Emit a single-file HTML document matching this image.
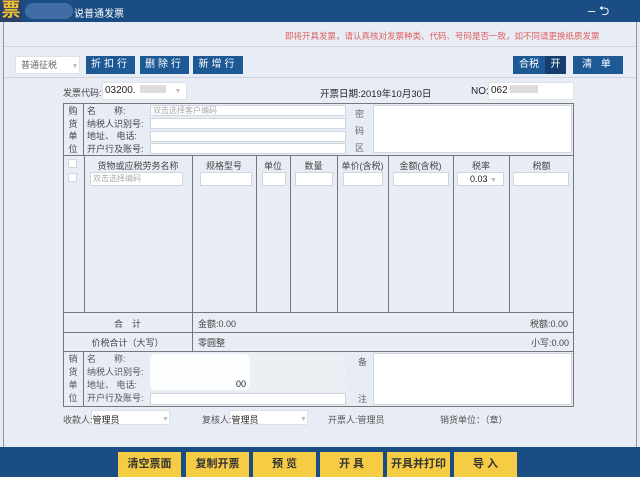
<!DOCTYPE html>
<html><head><meta charset="utf-8"><style>
*{margin:0;padding:0;box-sizing:border-box}
body{width:640px;height:477px;overflow:hidden;background:#e6ebf3;font-family:"Liberation Sans","Noto Sans CJK SC",sans-serif;font-size:9px;color:#333;position:relative}
.a{position:absolute}
.title{left:0;top:0;width:640px;height:22px;background:#1b4d85}
.panel{left:3px;top:22px;width:634px;height:425px;border-left:1px solid #8a97a8;border-right:1px solid #8a97a8;background:#e8edf5}
.btn{background:#1d5a95;color:#fff;text-align:center;line-height:18px;font-size:10px;letter-spacing:3px}
.inp{background:#fff;border:1px solid #d0d6de}
.sel{background:#fff;border:1px solid #dde2e8}
.vl{width:1px;background:#777}
.hl{height:1px;background:#777}
.lbl{color:#444}
.yb{background:#f6cc45;color:#333;text-align:center;line-height:25px;font-size:11px;font-weight:bold;top:452px;height:25px;width:63px}
.arrow{color:#bbb;font-size:7px}
</style></head><body>
<div class="a title"></div>
<div class="a" style="left:0;top:0;width:22px;height:22px;background:#2a3f6a;color:#f0c030;font-size:19px;font-weight:bold;line-height:22px;text-align:center">票</div>
<div class="a" style="left:25px;top:3px;width:48px;height:16px;background:#4f7bb0;border-radius:8px;opacity:.7"></div>
<div class="a" style="left:74px;top:5px;color:#fff;font-size:10px">说普通发票</div>
<div class="a" style="left:588px;top:2px;color:#fff;font-size:13px">– ⮌</div>
<div class="a panel"></div>
<div class="a" style="left:4px;top:46px;width:632px;height:1px;background:#ccd3dc"></div>
<div class="a" style="left:285px;top:30px;color:#e06060;font-size:8.5px">即将开具发票，请认真核对发票种类、代码、号码是否一致，如不同请更换纸质发票</div>
<div class="a" style="left:4px;top:77px;width:632px;height:1px;background:#ccd3dc"></div>
<div class="a sel" style="left:15px;top:56px;width:65px;height:18px;line-height:16px;padding-left:5px;color:#666">普通征税 <span class="arrow" style="margin-left:12px">▼</span></div>
<div class="a btn" style="left:86px;top:56px;width:49px;height:18px">折扣行</div>
<div class="a btn" style="left:140px;top:56px;width:49px;height:18px">删除行</div>
<div class="a btn" style="left:193px;top:56px;width:50px;height:18px">新增行</div>
<div class="a btn" style="left:513px;top:56px;width:32px;height:18px;letter-spacing:0">合税</div>
<div class="a btn" style="left:545px;top:56px;width:21px;height:18px;background:#163d6e;letter-spacing:0">开</div>
<div class="a btn" style="left:573px;top:56px;width:50px;height:18px">清 单</div>
<div class="a sel" style="left:102px;top:82px;width:85px;height:18px;line-height:16px;padding-left:2px;font-size:10px;color:#222">03200.<span style="display:inline-block;width:26px;height:8px;background:#ddd;margin-left:4px"></span> <span class="arrow" style="margin-left:6px">▼</span></div>
<div class="a lbl" style="left:63px;top:86px;font-size:9px">发票代码:</div>
<div class="a" style="left:320px;top:86px;font-size:9.5px;color:#222">开票日期:2019年10月30日</div>
<div class="a sel" style="left:488px;top:82px;width:86px;height:18px;line-height:16px;padding-left:2px;font-size:10px;color:#222">062<span style="display:inline-block;width:28px;height:8px;background:#ddd;margin-left:2px"></span><span class="arrow" style="margin-left:34px">▼</span></div>
<div class="a" style="left:471px;top:86px;font-size:10px;color:#222">NO:</div>
<!-- table -->
<div class="a" style="left:63px;top:103px;width:511px;height:304px;border:1px solid #777"></div>
<div class="a hl" style="left:63px;top:155px;width:511px"></div>
<div class="a hl" style="left:63px;top:312px;width:511px"></div>
<div class="a hl" style="left:63px;top:332px;width:511px"></div>
<div class="a hl" style="left:63px;top:351px;width:511px"></div>
<div class="a vl" style="left:83px;top:103px;height:52px"></div>
<div class="a vl" style="left:83px;top:351px;height:56px"></div>
<div class="a vl" style="left:192px;top:312px;height:39px"></div>
<!-- buyer -->
<div class="a lbl" style="left:66px;top:105px;width:14px;line-height:12.5px;text-align:center;font-size:9px">购<br>货<br>单<br>位</div>
<div class="a lbl" style="left:87px;top:105px;line-height:12.5px;font-size:9px">名　　称:<br>纳税人识别号:<br>地址、 电话:<br>开户行及账号:</div>
<div class="a inp" style="left:150px;top:105px;width:196px;height:11px;color:#aaa;font-size:8px;line-height:9px;padding-left:2px">双击选择客户编码</div>
<div class="a inp" style="left:150px;top:118px;width:196px;height:11px"></div>
<div class="a inp" style="left:150px;top:131px;width:196px;height:11px"></div>
<div class="a inp" style="left:150px;top:143px;width:196px;height:11px"></div>
<div class="a lbl" style="left:355px;top:106px;line-height:17px;font-size:9px;color:#666">密<br>码<br>区</div>
<div class="a inp" style="left:373px;top:105px;width:199px;height:48px"></div>
<!-- item columns -->
<div class="a vl" style="left:84px;top:155px;height:157px"></div>
<div class="a vl" style="left:192px;top:155px;height:157px"></div>
<div class="a vl" style="left:256px;top:155px;height:157px"></div>
<div class="a vl" style="left:290px;top:155px;height:157px"></div>
<div class="a vl" style="left:337px;top:155px;height:157px"></div>
<div class="a vl" style="left:388px;top:155px;height:157px"></div>
<div class="a vl" style="left:453px;top:155px;height:157px"></div>
<div class="a vl" style="left:509px;top:155px;height:157px"></div>
<div class="a inp" style="left:68px;top:159px;width:9px;height:9px"></div>
<div class="a inp" style="left:68px;top:173px;width:9px;height:9px"></div>
<div class="a lbl" style="left:84px;top:159px;width:108px;text-align:center">货物或应税劳务名称</div>
<div class="a lbl" style="left:192px;top:159px;width:64px;text-align:center">规格型号</div>
<div class="a lbl" style="left:256px;top:159px;width:34px;text-align:center">单位</div>
<div class="a lbl" style="left:290px;top:159px;width:47px;text-align:center">数量</div>
<div class="a lbl" style="left:337px;top:159px;width:51px;text-align:center">单价(含税)</div>
<div class="a lbl" style="left:388px;top:159px;width:65px;text-align:center">金额(含税)</div>
<div class="a lbl" style="left:453px;top:159px;width:56px;text-align:center">税率</div>
<div class="a lbl" style="left:509px;top:159px;width:65px;text-align:center">税额</div>
<div class="a inp" style="left:90px;top:172px;width:93px;height:14px;color:#aaa;font-size:8px;line-height:12px;padding-left:2px">双击选择编码</div>
<div class="a inp" style="left:200px;top:172px;width:52px;height:14px"></div>
<div class="a inp" style="left:262px;top:172px;width:24px;height:14px"></div>
<div class="a inp" style="left:295px;top:172px;width:38px;height:14px"></div>
<div class="a inp" style="left:343px;top:172px;width:40px;height:14px"></div>
<div class="a inp" style="left:393px;top:172px;width:56px;height:14px"></div>
<div class="a inp" style="left:457px;top:172px;width:47px;height:14px;font-size:9px;line-height:12px;color:#222;padding-left:12px">0.03 <span class="arrow">▼</span></div>
<div class="a inp" style="left:513px;top:172px;width:56px;height:14px"></div>
<!-- totals -->
<div class="a lbl" style="left:63px;top:317px;width:129px;text-align:center">合　计</div>
<div class="a lbl" style="left:198px;top:317px">金额:0.00</div>
<div class="a lbl" style="left:530px;top:317px">税额:0.00</div>
<div class="a lbl" style="left:63px;top:336px;width:129px;text-align:center">价税合计（大写）</div>
<div class="a lbl" style="left:198px;top:336px">零圆整</div>
<div class="a lbl" style="left:531px;top:336px">小写:0.00</div>
<!-- seller -->
<div class="a lbl" style="left:66px;top:353px;width:14px;line-height:13px;text-align:center;color:#555">销<br>货<br>单<br>位</div>
<div class="a lbl" style="left:87px;top:353px;line-height:13px;color:#555">名　　称:<br>纳税人识别号:<br>地址、 电话:<br>开户行及账号:</div>
<div class="a" style="left:150px;top:354px;width:196px;height:11px;background:#eceff3"></div>
<div class="a" style="left:150px;top:367px;width:196px;height:11px;background:#eceff3"></div>
<div class="a" style="left:150px;top:380px;width:196px;height:11px;background:#eceff3"></div>
<div class="a inp" style="left:150px;top:393px;width:196px;height:12px"></div>
<div class="a" style="left:150px;top:354px;width:100px;height:36px;background:#fff;border-radius:6px;opacity:.85"></div>
<div class="a" style="left:236px;top:379px;font-size:9px;color:#222">00</div>
<div class="a lbl" style="left:358px;top:355px;color:#666">备</div>
<div class="a lbl" style="left:358px;top:392px;color:#666">注</div>
<div class="a inp" style="left:373px;top:353px;width:199px;height:52px"></div>
<!-- signers -->
<div class="a sel" style="left:91px;top:410px;width:79px;height:15px"></div>
<div class="a sel" style="left:229px;top:410px;width:79px;height:15px"></div>
<div class="a lbl" style="left:63px;top:413px;color:#555">收款人:<span style="color:#222">管理员</span></div>
<div class="a" style="left:162px;top:413px" ><span class="arrow">▼</span></div>
<div class="a lbl" style="left:202px;top:413px;color:#555">复核人:<span style="color:#222">管理员</span></div>
<div class="a" style="left:300px;top:413px"><span class="arrow">▼</span></div>
<div class="a lbl" style="left:328px;top:413px;color:#555">开票人:管理员</div>
<div class="a lbl" style="left:440px;top:413px;color:#555">销货单位：（章）</div>
<!-- bottom bar -->
<div class="a" style="left:0;top:447px;width:640px;height:30px;background:#1b4d85"></div>
<div class="a yb" style="left:118px">清空票面</div>
<div class="a yb" style="left:186px">复制开票</div>
<div class="a yb" style="left:253px">预 览</div>
<div class="a yb" style="left:320px">开 具</div>
<div class="a yb" style="left:387px">开具并打印</div>
<div class="a yb" style="left:454px">导 入</div>
</body></html>
